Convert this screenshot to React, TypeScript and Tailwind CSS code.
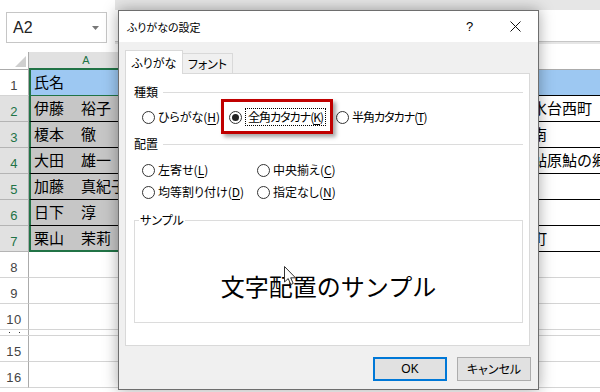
const jp = "font-['Noto_Sans_CJK_JP',sans-serif]"

const rows = [
  { n: "1", sei: "氏名", mei: "", right: "", blue: true, sel: false },
  { n: "2", sei: "伊藤", mei: "裕子", right: "水台西町", sel: true },
  { n: "3", sei: "榎本", mei: "徹", right: "南", sel: true },
  { n: "4", sei: "大田", mei: "雄一", right: "鮎原鮎の郷", sel: true },
  { n: "5", sei: "加藤", mei: "真紀子", right: "", sel: true },
  { n: "6", sei: "日下", mei: "淳", right: "", sel: true },
  { n: "7", sei: "栗山", mei: "茉莉", right: "町", sel: true, last: true },
]

function RowHead({ n, sel }: { n: string; sel?: boolean }) {
  return (
    <div
      className={`flex w-[29px] shrink-0 items-end justify-center border-r border-b border-r-[#ababab] pb-[3px] font-['Liberation_Sans',sans-serif] text-[13px] leading-none tracking-[0.5px] ${
        sel ? "border-b-[#b4b4b4] bg-[#e1e1e1] text-[#217346]" : "border-b-[#d4d4d4] bg-white text-[#444]"
      }`}
    >
      {n}
    </div>
  )
}

function DataRow({ r }: { r: (typeof rows)[number] }) {
  return (
    <div className={`flex h-[26px] ${jp} text-[15px] leading-none text-black`}>
      <RowHead n={r.n} sel={r.sel} />
      <div
        className={`flex w-[114px] shrink-0 items-center border-l-2 border-l-[#217346] pb-[2px] pl-[3px] ${
          r.blue ? "border-b border-b-[#217346] bg-[#9dc8f2]" : "bg-[#c6c6c6]"
        } ${r.last ? "border-b-2 border-b-[#217346]" : r.blue ? "" : "border-b border-b-black"}`}
      >
        <span className="w-[47px] shrink-0">{r.sei}</span>
        <span className="whitespace-nowrap">{r.mei}</span>
      </div>
      <div className={`flex flex-1 border-b border-b-black ${r.blue ? "bg-[#9dc8f2]" : "bg-white"}`}>
        <div className="w-[389px] shrink-0" />
        <div className="flex flex-1 items-center overflow-hidden whitespace-nowrap pb-[2px]">{r.right}</div>
      </div>
    </div>
  )
}

function EmptyRow({ n }: { n: string }) {
  return (
    <div className="flex h-[26px]">
      <RowHead n={n} />
      <div className="flex-1 border-b border-b-[#d4d4d4]" />
    </div>
  )
}

function Radio({ checked }: { checked?: boolean }) {
  return (
    <span className="flex size-[13px] shrink-0 items-center justify-center rounded-full border border-[#333] bg-white">
      {checked && <span className="size-[7px] rounded-full bg-[#222]" />}
    </span>
  )
}

function Choice({
  label,
  k,
  checked,
  focus,
  tight,
  className = "",
}: {
  label: string
  k: string
  checked?: boolean
  focus?: boolean
  tight?: boolean
  className?: string
}) {
  return (
    <div className={`flex items-center gap-[3px] ${className}`}>
      <Radio checked={checked} />
      <span
        className={`whitespace-nowrap ${tight ? "tracking-[-1px]" : ""} ${
          focus ? "border border-dotted border-black px-[2px]" : ""
        }`}
      >
        {label}(<u className="underline-offset-2">{k}</u>)
      </span>
    </div>
  )
}

function GroupTitle({ children, className = "" }: { children: string; className?: string }) {
  return (
    <div className={`flex h-[20px] items-center gap-[5px] pl-[8px] pr-[6px] ${className}`}>
      <span>{children}</span>
      <div className="h-px flex-1 bg-[#dcdcdc]" />
    </div>
  )
}

function Dialog() {
  return (
    <div
      className={`absolute left-[118px] top-[10px] flex h-[380px] w-[421px] flex-col border border-[#6e6e6e] bg-[#f0f0f0] shadow-[0_0_14px_rgba(0,0,0,0.35)] ${jp} text-[12px] leading-[16px] text-black [font-feature-settings:'palt']`}
    >
      <div className="flex h-[31px] shrink-0 items-center bg-white">
        <span className="flex-1 pl-[8px] text-[11px]">ふりがなの設定</span>
        <span className="flex w-[45px] justify-center font-['Liberation_Sans',sans-serif] text-[13px]">?</span>
        <span className="flex w-[46px] justify-center">
          <svg width="11" height="11" viewBox="0 0 11 11">
            <path d="M0.5 0.5 L10.5 10.5 M10.5 0.5 L0.5 10.5" stroke="#111" strokeWidth="1" />
          </svg>
        </span>
      </div>

      <div className="flex flex-1 flex-col pl-[6px] pt-[8px]">
        <div className="relative z-10 -mb-px flex h-[24px] items-end">
          <div className="flex h-[24px] w-[58px] items-center justify-center border border-b-0 border-[#d9d9d9] bg-white">
            ふりがな
          </div>
          <div className="flex h-[21px] w-[50px] items-center justify-center border border-l-0 border-[#d9d9d9] bg-[#f0f0f0] pt-[1px]">
            フォント
          </div>
        </div>

        <div className="relative h-[273px] w-[405px] border border-[#d9d9d9] bg-white">
          <GroupTitle className="mt-[8px]">種類</GroupTitle>
          <div className="mt-[5px] flex h-[20px] items-center pl-[16px]">
            <Choice label="ひらがな" k="H" className="w-[87px]" />
            <Choice label="全角カタカナ" k="K" checked focus tight className="w-[107px]" />
            <Choice label="半角カタカナ" k="T" tight />
          </div>

          <GroupTitle className="mt-[7px]">配置</GroupTitle>
          <div className="mt-[6px] flex h-[20px] items-center pl-[16px]">
            <Choice label="左寄せ" k="L" className="w-[115px]" />
            <Choice label="中央揃え" k="C" />
          </div>
          <div className="mt-[2px] flex h-[20px] items-center pl-[16px]">
            <Choice label="均等割り付け" k="D" className="w-[115px]" />
            <Choice label="指定なし" k="N" />
          </div>

          <fieldset className="ml-[8px] mt-[11px] h-[110px] w-[389px] border border-[#dcdcdc]">
            <legend className="ml-[4px] px-[1px] leading-[14px]">サンプル</legend>
            <div className="pt-[44px] text-center text-[24px] leading-[30px] [font-feature-settings:normal]">
              文字配置のサンプル
            </div>
          </fieldset>

          <div className="pointer-events-none absolute left-[95px] top-[25px] h-[35px] w-[112px] border-[3px] border-[#c00000] shadow-[3px_3px_4px_rgba(0,0,0,0.35)]" />
        </div>

        <div className="mt-[11px] flex justify-end gap-[10px] pr-[7px]">
          <div className="flex h-[24px] w-[74px] items-center justify-center border-2 border-[#0078d7] bg-[#e1e1e1] font-['Liberation_Sans',sans-serif] text-[12px]">
            OK
          </div>
          <div className="flex h-[24px] w-[74px] items-center justify-center border border-[#adadad] bg-[#e1e1e1]">
            キャンセル
          </div>
        </div>
      </div>
    </div>
  )
}

export default function App() {
  return (
    <div className="relative h-[392px] w-[600px] overflow-hidden bg-white">
      <div className="flex h-[44px]">
        <div className="w-[115px] shrink-0 pl-[6px] pt-[12px]">
          <div className="flex h-[31px] w-[101px] items-center justify-between border border-[#c6c6c6] pl-[6px] pr-[7px] font-['Liberation_Sans',sans-serif] text-[16px] text-[#222]">
            <span>A2</span>
            <svg width="7" height="4" viewBox="0 0 7 4">
              <path d="M0 0 H7 L3.5 4 Z" fill="#777" />
            </svg>
          </div>
        </div>
        <div className="flex-1 bg-[#e6e6e6] pt-[10px]">
          <div className="h-[32px] border-b border-[#c6c6c6] bg-white" />
        </div>
      </div>

      <div className="mt-[8px] flex h-[18px]">
        <div className="flex w-[29px] shrink-0 items-end justify-end border-r border-b border-[#ababab] pb-[2px] pr-[2px]">
          <svg width="11" height="11" viewBox="0 0 11 11">
            <path d="M11 0 V11 H0 Z" fill="#cfcfcf" />
          </svg>
        </div>
        <div className="flex w-[114px] shrink-0 items-center justify-center border-b-2 border-[#217346] bg-[#e1e1e1] font-['Liberation_Sans',sans-serif] text-[11px] text-[#217346]">
          A
        </div>
        <div className="flex-1 border-b border-[#ababab]" />
      </div>

      {rows.map((r) => (
        <DataRow key={r.n} r={r} />
      ))}
      <EmptyRow n="8" />
      <EmptyRow n="9" />
      <EmptyRow n="10" />
      <div className="flex h-[6px] border-b border-[#d4d4d4]">
        <div className="flex w-[29px] items-center justify-center gap-[9px] border-r border-[#ababab]">
          <span className="size-[1px] bg-[#333]" />
          <span className="size-[1px] bg-[#333]" />
        </div>
      </div>
      <EmptyRow n="15" />
      <EmptyRow n="16" />

      <Dialog />

      <svg className="absolute left-[284px] top-[266px]" width="13" height="20" viewBox="0 0 13 20">
        <path d="M0.5 0.5 V16 L4.2 12.6 L6.8 18.5 L9.2 17.4 L6.7 11.8 H11.5 Z" fill="#fff" stroke="#333" strokeWidth="1" />
      </svg>
    </div>
  )
}
